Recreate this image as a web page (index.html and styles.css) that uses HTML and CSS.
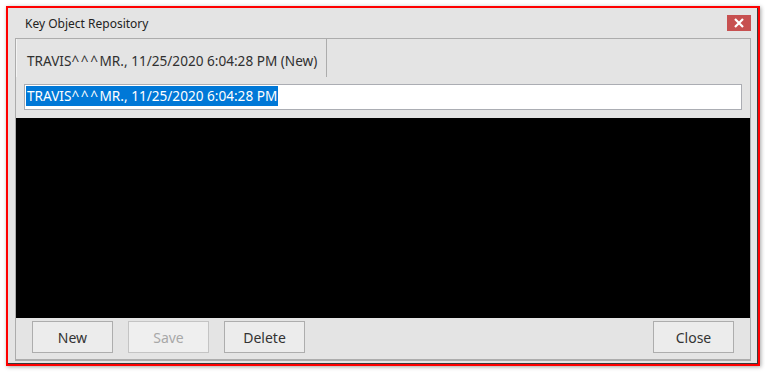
FILE: index.html
```html
<html>
<head>
<meta charset="UTF-8">
<title>Key Object Repository</title>
<link rel="stylesheet" href="styles.css">
</head>
<body>

<div class="frame">
  <div class="window">

    <div class="titleBar">
      <span class="titleText">Key Object Repository</span>
      <span class="closeBox">
        <svg width="12" height="10" viewBox="0 0 12 10"><path d="M2 1 L10 9 M10 1 L2 9" stroke="#fff" stroke-width="2.2" fill="none"/></svg>
      </span>
    </div>

    <div class="tabControl">
      <div class="tabStrip">
        <div class="tab">TRAVIS<span class="carets">^^^</span>MR., 11/25/2020 6:04:28 PM (New)</div>
      </div>
      <div class="tabPage">
        <div class="nameBox"><span class="selected">TRAVIS<span class="carets">^^^</span>MR., 11/25/2020 6:04:28 PM</span></div>
        <div class="viewer"></div>
        <div class="buttonRow">
          <button class="btn">New</button>
          <button class="btn disabled">Save</button>
          <button class="btn">Delete</button>
          <span class="spacer"></span>
          <button class="btn">Close</button>
        </div>
      </div>
    </div>

  </div>
</div>

</body>
</html>
```

FILE: styles.css
```css
body { margin: 0 ; background: #ffffff ; font-family: "Noto Sans", "Open Sans", sans-serif ; }

.frame  { margin: 6px 0 0 6px ; width: 754px ; height: 360px ; box-sizing: border-box ;
          border: 2px solid #ff0000 ; box-shadow: 1px 1px 4px rgba(0,0,0,0.35) ; }
.window { height: 100% ; box-sizing: border-box ; background: #e4e4e4 ;
          border-right: 1px solid #3a3a3a ; border-bottom: 1px solid #3a3a3a ;
          display: flex ; flex-direction: column ; }

.titleBar   { height: 30px ; flex: none ; display: flex ; align-items: center ;
              padding: 0 6px 0 17px ; }
.titleText  { font-size: 12px ; color: #222 ; flex: 1 ; }
.closeBox   { width: 24px ; height: 16px ; background: #c75050 ; display: flex ;
              align-items: center ; justify-content: center ; margin-top: -1px ; }

.tabControl { flex: 1 ; margin: 0 6px 2px 7px ; border: 1px solid #acacac ; border-bottom-width: 2px ;
              display: flex ; flex-direction: column ; }
.tabStrip   { height: 38px ; flex: none ; display: flex ; }
.tab        { border-left: 1px solid #f4f4f4 ; border-right: 1px solid #acacac ;
              padding: 12px 9px 0 10px ; font-size: 13.6px ; color: #303030 ; }
.carets     { letter-spacing: 1.6px ; }

.tabPage    { flex: 1 ; display: flex ; flex-direction: column ; }
.nameBox    { margin: 7px 8px 0 8px ; height: 26px ; box-sizing: border-box ; background: #ffffff ;
              border: 1px solid #abadb3 ; padding: 1px 1px ; font-size: 13.6px ; line-height: 20px ; }
.selected   { background: #0078d7 ; color: #ffffff ; padding: 0 1px ; display: inline-block ; }
.viewer     { margin-top: 8px ; height: 200px ; background: #000000 ; }

.buttonRow  { flex: 1 ; display: flex ; align-items: flex-start ; gap: 15px ; padding: 3px 16px 0 16px ; }
.btn        { width: 81px ; height: 32px ; font-family: inherit ; font-size: 14px ; color: #333 ;
              background: #ececec ; border: 1px solid #adadad ; padding: 0 ; }
.btn.disabled { color: #a8a8a8 ; background: #efefef ; border-color: #c4c4c4 ; }
.spacer     { flex: 1 ; }
```
